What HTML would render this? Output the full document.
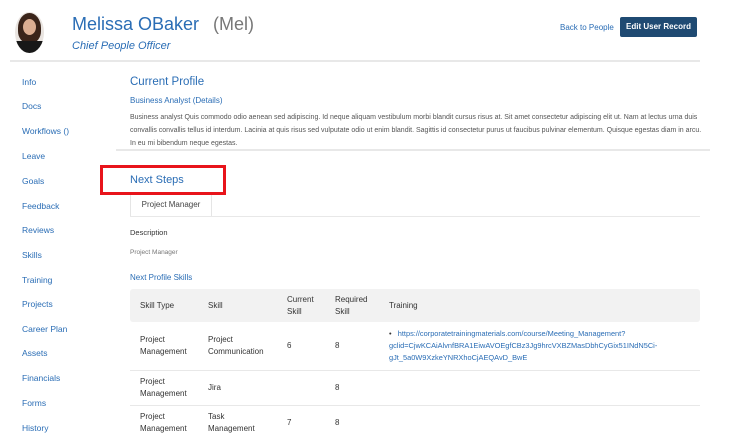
<!DOCTYPE html>
<html><head><meta charset="utf-8"><style>
body{margin:0;width:749px;height:445px;overflow:hidden;background:#fff;font-family:"Liberation Sans",sans-serif;position:relative}
.a{position:absolute;white-space:nowrap}
.nav{left:22px;font-size:8.5px;color:#2a6db5}
.b{color:#2a6db5}
.t{font-size:8px;color:#333;line-height:12px}
</style></head><body>
<div class="a" style="left:15px;top:12px;width:29px;height:41px;border-radius:50%;overflow:hidden;background:#e9e4e0">
 <div style="position:absolute;left:3px;top:1px;width:23px;height:30px;border-radius:50% 50% 40% 40%;background:#3a241a"></div>
 <div style="position:absolute;left:8px;top:7px;width:13px;height:16px;border-radius:50%;background:#dcae92"></div>
 <div style="position:absolute;left:0;top:29px;width:29px;height:14px;background:#181818"></div>
</div>
<div class="a b" style="left:72px;top:14px;font-size:18px">Melissa OBaker</div>
<div class="a" style="left:213px;top:14px;font-size:18px;color:#777">(Mel)</div>
<div class="a b" style="left:72px;top:40px;font-size:11px;font-style:italic">Chief People Officer</div>
<div class="a b" style="left:560px;top:23px;font-size:8px">Back to People</div>
<div class="a" style="left:620px;top:17px;width:77px;height:20px;background:#1f4a72;border-radius:2px;color:#fff;font-size:8px;font-weight:bold;text-align:center;line-height:20px">Edit User Record</div>
<div class="a" style="left:10px;top:60px;width:690px;height:2px;background:#e8e8e8"></div>
<div class="a nav" style="top:77px">Info</div>
<div class="a nav" style="top:101px">Docs</div>
<div class="a nav" style="top:126px">Workflows ()</div>
<div class="a nav" style="top:151px">Leave</div>
<div class="a nav" style="top:176px">Goals</div>
<div class="a nav" style="top:201px">Feedback</div>
<div class="a nav" style="top:225px">Reviews</div>
<div class="a nav" style="top:250px">Skills</div>
<div class="a nav" style="top:275px">Training</div>
<div class="a nav" style="top:299px">Projects</div>
<div class="a nav" style="top:324px">Career Plan</div>
<div class="a nav" style="top:348px">Assets</div>
<div class="a nav" style="top:373px">Financials</div>
<div class="a nav" style="top:398px">Forms</div>
<div class="a nav" style="top:423px">History</div>
<div class="a b" style="left:130px;top:76px;font-size:11.5px">Current Profile</div>
<div class="a b" style="left:130px;top:96px;font-size:8px">Business Analyst (Details)</div>
<div class="a" style="left:130px;top:111px;width:572px;white-space:normal;font-size:7px;line-height:13px;color:#555">Business analyst Quis commodo odio aenean sed adipiscing. Id neque aliquam vestibulum morbi blandit cursus risus at. Sit amet consectetur adipiscing elit ut. Nam at lectus urna duis convallis convallis tellus id interdum. Lacinia at quis risus sed vulputate odio ut enim blandit. Sagittis id consectetur purus ut faucibus pulvinar elementum. Quisque egestas diam in arcu. In eu mi bibendum neque egestas.</div>
<div class="a" style="left:116px;top:149px;width:594px;height:2px;background:#e8e8e8"></div>
<div class="a" style="left:100px;top:165px;width:120px;height:24px;border:3px solid #e8141b"></div>
<div class="a b" style="left:130px;top:174px;font-size:11px">Next Steps</div>
<div class="a" style="left:130px;top:195px;width:80px;height:21px;border-left:1px solid #e5e5e5;border-right:1px solid #e5e5e5;font-size:8px;color:#444;text-align:center;line-height:19px">Project Manager</div>
<div class="a" style="left:130px;top:216px;width:570px;height:1px;background:#e8e8e8"></div>
<div class="a" style="left:130px;top:228px;font-size:7.5px;color:#333">Description</div>
<div class="a" style="left:130px;top:249px;font-size:6.5px;color:#777">Project Manager</div>
<div class="a b" style="left:130px;top:273px;font-size:8px">Next Profile Skills</div>
<div class="a" style="left:130px;top:289px;width:570px;height:33px;background:#f2f2f2;border-radius:3px"></div>
<div class="a t" style="left:140px;top:300px">Skill Type</div>
<div class="a t" style="left:208px;top:300px">Skill</div>
<div class="a t" style="left:287px;top:294px">Current<br>Skill</div>
<div class="a t" style="left:335px;top:294px">Required<br>Skill</div>
<div class="a t" style="left:389px;top:300px">Training</div>
<div class="a t" style="left:140px;top:334px">Project<br>Management</div>
<div class="a t" style="left:208px;top:334px">Project<br>Communication</div>
<div class="a t" style="left:287px;top:340px">6</div>
<div class="a t" style="left:335px;top:340px">8</div>
<div class="a b" style="left:389px;top:328px;font-size:7.4px;line-height:12px"><span style="color:#333">&bull;&nbsp;&nbsp;&nbsp;</span>https://corporatetrainingmaterials.com/course/Meeting_Management?<br>gclid=CjwKCAiAlvnfBRA1EiwAVOEgfCBz3Jg9hrcVXBZMasDbhCyGix51INdN5Ci-<br>gJt_5a0W9XzkeYNRXhoCjAEQAvD_BwE</div>
<div class="a" style="left:130px;top:370px;width:570px;height:1px;background:#e8e8e8"></div>
<div class="a t" style="left:140px;top:376px">Project<br>Management</div>
<div class="a t" style="left:208px;top:382px">Jira</div>
<div class="a t" style="left:335px;top:382px">8</div>
<div class="a" style="left:130px;top:405px;width:570px;height:1px;background:#e8e8e8"></div>
<div class="a t" style="left:140px;top:411px">Project<br>Management</div>
<div class="a t" style="left:208px;top:411px">Task<br>Management</div>
<div class="a t" style="left:287px;top:417px">7</div>
<div class="a t" style="left:335px;top:417px">8</div>
</body></html>
